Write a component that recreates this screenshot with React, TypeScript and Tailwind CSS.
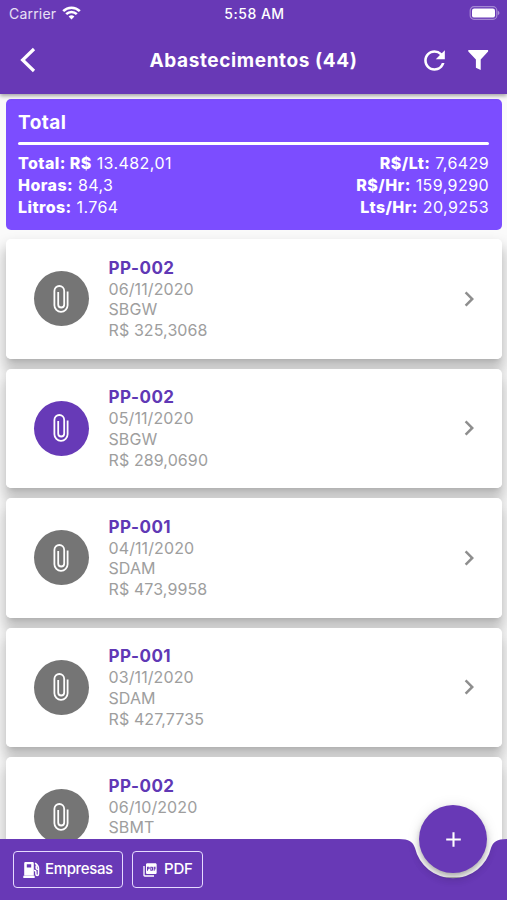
import React from "react";
import {
  MdAdd,
  MdChevronRight,
  MdPictureAsPdf,
  MdRefresh,
} from "react-icons/md";

type Refuel = {
  plane: string;
  date: string;
  place: string;
  price: string;
  attached?: boolean;
};

const refuels: Refuel[] = [
  { plane: "PP-002", date: "06/11/2020", place: "SBGW", price: "325,3068" },
  { plane: "PP-002", date: "05/11/2020", place: "SBGW", price: "289,0690", attached: true },
  { plane: "PP-001", date: "04/11/2020", place: "SDAM", price: "473,9958" },
  { plane: "PP-001", date: "03/11/2020", place: "SDAM", price: "427,7735" },
  { plane: "PP-002", date: "06/10/2020", place: "SBMT", price: "298,4410" },
];

const StatusBar: React.FC = () => (
  <div className="grid h-7 grid-cols-3 items-center pl-[9px] pr-[7px] text-[14px] leading-none text-white">
    <div className="flex items-center gap-[6px] text-white/85">
      <span className="tracking-[0.2px]">Carrier</span>
      <svg className="-mt-[2px]" width="19" height="14" viewBox="0 0 19 14" fill="none" stroke="white" strokeWidth="2.6">
        <path d="M1.2 5.1a11.8 11.8 0 0 1 16.6 0" />
        <path d="M4.2 8.2a7.5 7.5 0 0 1 10.6 0" />
        <path d="M9.5 13.6 6.6 10.6a4.1 4.1 0 0 1 5.8 0Z" fill="white" stroke="none" />
      </svg>
    </div>
    <span className="text-center font-medium tracking-[0.5px]">5:58 AM</span>
    <svg className="-mt-[2px] justify-self-end" width="31" height="14" viewBox="0 0 31 14">
      <rect x="1.2" y="0.7" width="26.6" height="12.6" rx="3.8" fill="none" stroke="white" strokeOpacity="0.4" strokeWidth="1.2" />
      <rect x="3" y="2.4" width="23" height="9.2" rx="2.2" fill="white" />
      <path d="M28.8 4.8v4.4c1-.4 1.6-1.2 1.6-2.2s-.6-1.8-1.6-2.2Z" fill="white" fillOpacity="0.45" />
    </svg>
  </div>
);

const Header: React.FC = () => (
  <header className="relative z-10 h-[94px] shrink-0 bg-[#6839b6] shadow-[0_2px_4px_rgba(0,0,0,0.35)]">
    <StatusBar />
    <div className="flex h-16 items-center text-white">
      <button className="flex w-[106px] pl-5" aria-label="Voltar">
        <svg width="16" height="26" viewBox="0 0 16 26" fill="none" stroke="white" strokeWidth="3.2">
          <path d="M14 2 2.6 13 14 24" />
        </svg>
      </button>
      <h1 className="flex-1 pt-[2px] text-center text-[19px] font-bold tracking-[0.6px] whitespace-nowrap">
        Abastecimentos (44)
      </h1>
      <div className="flex w-[106px] items-center justify-end gap-[18px] pr-[18px]">
        <MdRefresh size={31} />
        <svg width="21" height="20" viewBox="0 0 21 20" fill="white">
          <path d="M.3 0h19.8v1.6l-7.4 8V20l-4.8-2.2V9.6L.3 1.6Z" />
        </svg>
      </div>
    </div>
  </header>
);

const Pair: React.FC<{ label: string; value: string }> = ({ label, value }) => (
  <p>
    <span className="font-extrabold">{label}</span> {value}
  </p>
);

const TotalCard: React.FC = () => (
  <section className="relative z-[1] h-[131px] shrink-0 rounded-[5px] bg-[#7c4dff] px-[12.5px] pt-[10px] text-white">
    <h2 className="text-[19px] leading-7 font-bold tracking-[0.45px]">Total</h2>
    <div className="mt-[5px] h-[3px] rounded-full bg-white" />
    <div className="mt-[7px] flex justify-between text-[16px] leading-[22px] tracking-[0.42px]">
      <div>
        <Pair label="Total: R$" value="13.482,01" />
        <Pair label="Horas:" value="84,3" />
        <Pair label="Litros:" value="1.764" />
      </div>
      <div className="text-right">
        <Pair label="R$/Lt:" value="7,6429" />
        <Pair label="R$/Hr:" value="159,9290" />
        <Pair label="Lts/Hr:" value="20,9253" />
      </div>
    </div>
  </section>
);

const ClipIcon: React.FC = () => (
  <svg width="16" height="28" viewBox="0 0 16 28" fill="none" stroke="white" strokeWidth="1.8">
    <path d="M14.6 6.5v13.8a6.6 6.6 0 0 1-13.2 0V5.9a4.9 4.9 0 0 1 9.8 0v13.6a3 3 0 0 1-6 0V7" />
  </svg>
);

const RefuelCard: React.FC<{ item: Refuel }> = ({ item }) => (
  <div className="flex h-[119.5px] items-center rounded-[5px] bg-white pr-[18px] pl-7">
    <div
      className={`flex size-[55px] items-center justify-center rounded-full ${
        item.attached ? "bg-[#673ab7]" : "bg-[#757575]"
      }`}
    >
      <ClipIcon />
    </div>
    <div className="ml-5 flex-1 text-[16px] leading-[20.7px] tracking-[0.1px] text-[#9e9e9e]">
      <p className="text-[17px] leading-[22px] font-bold tracking-[0.45px] text-[#6038b5]">
        {item.plane}
      </p>
      <p>{item.date}</p>
      <p>{item.place}</p>
      <p>R$ {item.price}</p>
    </div>
    <MdChevronRight size={30} className="text-[#8e8e8e]" />
  </div>
);

const PumpIcon: React.FC = () => (
  <svg width="17" height="18" viewBox="0 0 17 18" fill="white">
    <path
      fillRule="evenodd"
      d="M2.5 1h7A1.3 1.3 0 0 1 10.8 2.3V14.5H1.2V2.3A1.3 1.3 0 0 1 2.5 1ZM3.8 3.2v3.4h4.4V3.2ZM.3 14.8h11.4v2.2H.3Z"
    />
    <path
      d="M11 9.5h.9c.7 0 1 .5 1 1.2v2.2c0 2 2.6 2 2.6 0V7.2c0-1.8-1.2-3.4-3.4-5M13.2 4.5v2.6c0 .9 1 1.5 2.2 1.4"
      fill="none"
      stroke="white"
      strokeWidth="1.5"
    />
  </svg>
);

const BottomBar: React.FC = () => (
  <footer className="absolute inset-x-0 bottom-0 z-10 h-[61px]">
    <div className="flex h-full items-center gap-[9px] bg-[#6839b6] pl-[13px] text-[15px] font-medium text-white [clip-path:path('M0_0H399C409_0_413_3_415_9A39_39_0_0_0_491_9C493_3_497_0_507_0V61H0Z')]">
      <button className="flex h-[37px] w-[110px] items-center gap-[5px] rounded-[4px] border border-[#e6daff] pl-[9px] tracking-[-0.35px]">
        <PumpIcon />
        Empresas
      </button>
      <button className="flex h-[37px] w-[71px] items-center gap-[6px] rounded-[4px] border border-[#e6daff] pl-[9px] tracking-[-0.2px]">
        <MdPictureAsPdf size={16} />
        PDF
      </button>
    </div>
    <button
      aria-label="Adicionar"
      className="absolute -top-[34px] right-[20px] flex size-[68px] items-center justify-center rounded-full bg-[#6839b6] text-white shadow-[0_3px_5px_-1px_rgba(0,0,0,0.2),0_6px_10px_rgba(0,0,0,0.14),0_1px_14px_rgba(0,0,0,0.1)]"
    >
      <MdAdd size={25} />
    </button>
  </footer>
);

const App: React.FC = () => {
  return (
    <div className="relative flex h-[900px] w-[507px] flex-col overflow-hidden bg-[#fafafa] font-[Inter,'Liberation_Sans',sans-serif]">
      <Header />
      <main className="flex min-h-0 flex-1 flex-col overflow-hidden px-[5.5px] pt-[4.5px]">
        <TotalCard />
        <ul className="mt-[9.5px] flex flex-col gap-[10px]">
          {refuels.map((item, i) => (
            <li
              key={i}
              className="shrink-0 rounded-[5px] shadow-[0_5px_5px_-3px_rgba(0,0,0,0.12),0_10px_14px_3px_rgba(0,0,0,0.22)]"
            >
              <RefuelCard item={item} />
            </li>
          ))}
        </ul>
      </main>
      <BottomBar />
    </div>
  );
};

export default App;
